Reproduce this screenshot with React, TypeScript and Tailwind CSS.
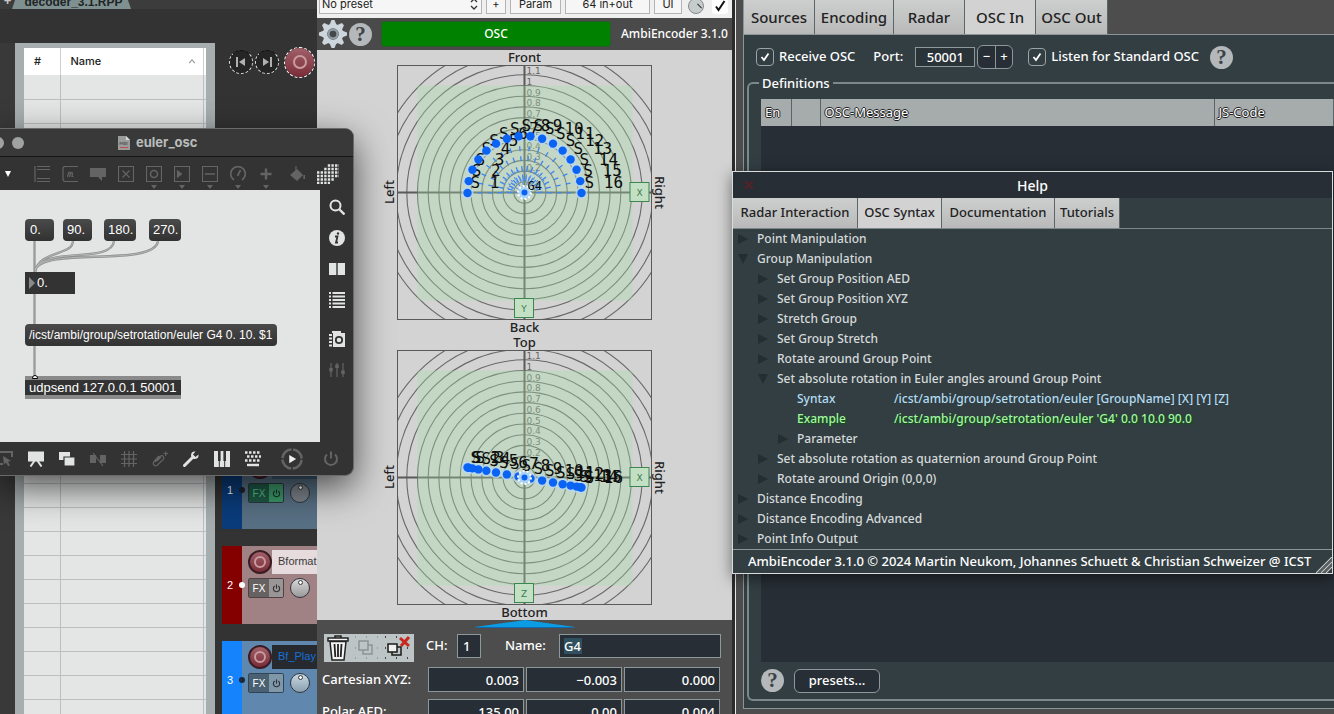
import React from "react";

const LUCIDA = "font-['Noto_Sans','Open_Sans',sans-serif]";

/* ---------- shared bits ---------- */

function HelpBadge({ className = "" }: { className?: string }) {
  return (
    <button
      aria-label="Show help"
      className={`flex size-[23px] shrink-0 items-center justify-center rounded-full bg-[#b4b8ba] font-['Liberation_Serif',serif] text-[21px] leading-none font-bold text-[#3c4447] ${className}`}
    >
      ?
    </button>
  );
}

/* ---------- DAW (left column) ---------- */

function RecordButton({ size }: { size: "sm" | "lg" }) {
  return (
    <button
      aria-label="Record"
      className={`flex shrink-0 items-center justify-center rounded-full bg-linear-to-b from-[#a0606a] to-[#7a2c38] ${
        size === "lg" ? "size-[29px] outline outline-dashed outline-white" : "size-6 border-2 border-[#3a1c22]"
      }`}
    >
      <span className={`rounded-full border-2 border-[#c99ba0] ${size === "lg" ? "size-[14px]" : "size-3"}`} />
    </button>
  );
}

function SkipButton({ dir }: { dir: "back" | "next" }) {
  return (
    <button
      aria-label={dir === "back" ? "Go to start" : "Go to end"}
      className="flex size-6 items-center justify-center rounded-full border border-dashed border-[#dddddd] border-t-[#111111] bg-[#252525]"
    >
      <svg viewBox="0 0 10 10" className="size-[10px] fill-[#b0b0b0]">
        {dir === "back" ? <path d="M0 0h2v10H0zM9 1v8L3 5z" /> : <path d="M8 0h2v10H8zM1 1v8l6-4z" />}
      </svg>
    </button>
  );
}

function PowerGlyph({ className }: { className: string }) {
  return (
    <svg viewBox="0 0 16 16" className={className} fill="none" stroke="currentColor" strokeWidth="2" strokeLinecap="round">
      <path d="M8 1.5v6M4.3 4a5.6 5.6 0 1 0 7.4 0" />
    </svg>
  );
}

type TrackProps = {
  n: number;
  name: string;
  strip: string;
  body: string;
  nameBox: string;
  fx: string;
  fxOn: string;
  knob: string;
  dot: string;
};

function Track({ n, name, strip, body, nameBox, fx, fxOn, knob, dot }: TrackProps) {
  return (
    <section className={`flex h-[78px] shrink-0 ${body}`}>
      <div className={`relative flex w-5 items-center justify-center font-['Liberation_Sans',sans-serif] text-[11px] text-white ${strip}`}>
        <span className="pr-1">{n}</span>
        <span className={`absolute -right-[3px] size-[6px] rounded-full ${dot}`} />
      </div>
      <div className="flex min-w-0 flex-1 flex-col gap-1 overflow-hidden pt-1 pl-[6px]">
        <div className="flex items-center">
          <RecordButton size="sm" />
          <span
            className={`h-6 flex-1 overflow-hidden pl-[6px] font-['Liberation_Sans',sans-serif] text-[11px] leading-[23px] whitespace-nowrap ${nameBox}`}
          >
            {name}
          </span>
        </div>
        <div className="flex items-center gap-[6px]">
          <div className="flex h-5 w-9 shrink-0 overflow-hidden rounded-[2px] border border-black/50">
            <button className={`w-5 font-['Liberation_Sans',sans-serif] text-[10px] ${fx}`}>FX</button>
            <button aria-label="FX bypass" className={`flex flex-1 items-center justify-center ${fxOn}`}>
              <PowerGlyph className="size-[9px]" />
            </button>
          </div>
          <span className={`flex size-5 shrink-0 justify-center rounded-full border border-[#30353a] ${knob}`}>
            <span className="mt-[2px] size-[3px] rounded-full bg-white outline outline-[#444444]" />
          </span>
        </div>
      </div>
    </section>
  );
}

function Daw() {
  return (
    <div className="flex w-[317px] shrink-0 flex-col overflow-hidden bg-[#333333]">
      <div className="flex h-[9px] shrink-0 items-end bg-[#3c3c3c] font-['Liberation_Sans',sans-serif] font-bold">
        <button className="w-3 pl-[3px] text-[13px] leading-[16px] text-[#c8c8c8]">+</button>
        <div className="w-[119px] bg-[#7f9090] pl-1 text-center text-[12px] leading-[14px] text-[#1e2626] [clip-path:polygon(4%_0,96%_0,100%_100%,0_100%)]">
          decoder_3.1.RPP
        </div>
      </div>
      <div className="flex min-h-0 flex-1">
        <div className="mt-[34px] w-[15px] bg-[#393939]" />
        <div className="mt-[34px] w-[200px] shrink-0 overflow-hidden bg-[#a6aeb0] pt-[5px] pr-[9px] pl-[9px]">
          <table className="w-full table-fixed border-collapse bg-[#e4e5e5] font-[Inter,sans-serif] text-[11px] font-medium text-[#222222]">
            <thead>
              <tr className="h-[27px] bg-white text-left">
                <th className="w-9 border-r border-[#cfcfcf] pl-[10px] font-medium">#</th>
                <th className="pl-[10px] font-medium">
                  <span className="flex items-center justify-between pr-[7px]">
                    Name
                    <svg viewBox="0 0 8 6" className="h-[5px] w-2" fill="none" stroke="#999" strokeWidth="1.3">
                      <path d="M.5 5 4 1l3.500 4" />
                    </svg>
                  </span>
                </th>
                <th className="w-[3px] border-l border-[#cfcfcf]" />
              </tr>
            </thead>
            <tbody>
              {Array.from({ length: 28 }, (_, i) => (
                <tr key={i} className="h-6 border-b border-[#bcbebf]">
                  <td className="border-r border-[#bcbebf]" />
                  <td />
                  <td className="border-l border-[#bcbebf]" />
                </tr>
              ))}
            </tbody>
          </table>
        </div>
        <div className="flex min-w-0 flex-1 flex-col gap-[17px] pl-[7px]">
          <div className="mt-[38px] mb-[357px] flex h-[30px] shrink-0 items-center gap-[2px] pl-[7px]">
            <SkipButton dir="back" />
            <SkipButton dir="next" />
            <span className="w-[2px]" />
            <RecordButton size="lg" />
          </div>
          <Track n={1} name="Enc" strip="bg-[#0a3c7c]" body="bg-[#587084]" nameBox="bg-[#3c5870]" fx="bg-[#1f5a45] text-[#58c890]" fxOn="bg-[#3d9a6b] text-[#113a28]" knob="bg-[#7d858b]" dot="bg-[#1a2430]" />
          <Track n={2} name="Bformat" strip="bg-[#840000]" body="bg-[#a08285]" nameBox="bg-[#e6dcdd] text-[#3a3a3a]" fx="bg-[#666262] text-white" fxOn="bg-[#9a9596] text-[#333333]" knob="bg-linear-to-b from-[#d8d8d8] to-[#9a9a9a]" dot="bg-white" />
          <Track n={3} name="Bf_Play" strip="bg-[#1583fb]" body="bg-[#6088ae]" nameBox="bg-[#262a2e] text-[#1670d8]" fx="bg-[#4a6073] text-white" fxOn="bg-[#8097a8] text-[#28333c]" knob="bg-linear-to-b from-[#c8d8e2] to-[#8aa0b0]" dot="bg-[#1a2a3c]" />
        </div>
      </div>
    </div>
  );
}

/* ---------- radar views ---------- */

const C = 127.5;
const RING = 10.7;
const SOURCES = Array.from({ length: 16 }, (_, i) => {
  const a = Math.PI - (i * 12 * Math.PI) / 180;
  return { n: i + 1, cos: Math.cos(a), sin: Math.sin(a) };
});
const RING_LABELS = ["1.1", "1", "0.9", "0.8", "0.7", "0.6", "0.5", "0.4", "0.3", "0.2"];

function Radar({ top, bottom, axis, side }: { top: string; bottom: string; axis: string; side?: boolean }) {
  const pts = SOURCES.map((s) => ({
    n: s.n,
    x: C + 57 * s.cos,
    y: side ? C + 10 * s.cos : C + 0.5 - 57 * s.sin,
  }));
  return (
    <section className="flex flex-col items-center text-[13px] font-medium text-[#222222]">
      <h3 className="leading-[15px]">{top}</h3>
      <div className="flex items-center">
        <span className="w-4 rotate-180 leading-4 [writing-mode:vertical-rl]">Left</span>
        <svg viewBox="0 0 255 255" className="size-[255px] shrink-0">
          <defs>
            <clipPath id={`clip-${axis}`}>
              <rect x="0" y="0" width="255" height="255" />
            </clipPath>
          </defs>
          <g clipPath={`url(#clip-${axis})`} fill="none" stroke="#686868" strokeWidth="1.1">
            {Array.from({ length: 14 }, (_, i) => (
              <circle key={i} cx={C} cy={C} r={(i + 1) * RING} />
            ))}
            <path d={`M${C} 0V255M0 ${C}H255`} stroke="#5a5a5a" strokeWidth="2" />
          </g>
          <rect x=".5" y=".5" width="254" height="254" fill="none" stroke="#5a5a5a" />
          <g fill="#666" fontSize="9" fontFamily="DejaVu Sans, sans-serif">
            {RING_LABELS.map((t, i) => (
              <text key={t} x={C + 2} y={C - (11 - i) * RING - 0.5}>
                {t}
              </text>
            ))}
          </g>
          <rect x={C - 107} y={C - 107} width="215" height="215" fill="#a8e0a8" fillOpacity=".34" />
          <g fill="#c4e0c4" stroke="#3c8650">
            <rect x="233" y="117.5" width="19" height="19" />
            <rect x="117.500" y="233.500" width="19" height="19" />
          </g>
          <g fill="#3c7a4c" fontSize="9" fontFamily="DejaVu Sans, sans-serif" textAnchor="middle">
            <text x="242.500" y="130.500">X</text>
            <text x="127" y="246.500">{axis}</text>
          </g>
          {!side && (
            <g stroke="#3f86f0" strokeWidth="1.300" strokeDasharray="5 5">
              {pts.map((p) => (
                <line key={p.n} x1={p.x} y1={p.y} x2={C} y2={C} />
              ))}
            </g>
          )}
          {!side &&
            [9, 13, 17, 22].map((r) => (
              <path key={r} d={`M${C - r} ${C}a${r} ${r} 0 0 1 ${2 * r} 0`} fill="none" stroke="#4c8cf0" strokeWidth="2.500" strokeDasharray="1 3" />
            ))}
          <g fill="#b8d8f8" fillOpacity=".75">
            {pts.map((p) => (
              <circle key={p.n} cx={p.x} cy={p.y} r="6" />
            ))}
          </g>
          <g fontFamily="DejaVu Sans Mono, monospace" fontSize="16" fill="#0c0c0c">
            {pts.map((p) => (
              <text key={p.n} x={p.x + 3} y={p.y - 5}>{`S ${p.n}`}</text>
            ))}
          </g>
          <g fill="#0a63f2">
            {pts.map((p) => (
              <circle key={p.n} cx={p.x} cy={p.y} r="4.200" />
            ))}
          </g>
          <circle cx={C} cy={C} r="6.500" fill="#a9d2f5" stroke="#fff" strokeWidth="2" strokeDasharray="2 2" />
          <circle cx={C} cy={C} r="3" fill="#0a63f2" />
          {!side && (
            <text x={C + 3} y={C - 3} fontFamily="DejaVu Sans Mono, monospace" fontSize="12" fill="#0c0c0c">
              G4
            </text>
          )}
        </svg>
        <span className="w-4 leading-4 [writing-mode:vertical-rl]">Right</span>
      </div>
      <h3 className="leading-[15px]">{bottom}</h3>
    </section>
  );
}

/* ---------- encoder plug-in ---------- */

function NumberRow({ label, values }: { label: string; values: string[] }) {
  return (
    <div className="flex h-[25px] items-center">
      <span className="w-[106px] shrink-0 whitespace-nowrap">{label}</span>
      <div className="flex gap-[2px]">
        {values.map((v, i) => (
          <input
            key={i}
            aria-label={`${label} ${i + 1}`}
            defaultValue={v}
            className="h-[25px] w-24 border border-[#8c989a] bg-[#272e35] pr-1 text-right text-[13px] text-white"
          />
        ))}
      </div>
    </div>
  );
}

const HOST_BTN = "h-5 shrink-0 border border-[#b4b4b4] bg-[#f6f6f6] leading-none";

function Encoder() {
  return (
    <div className={`flex w-[418px] shrink-0 flex-col overflow-hidden border-r-3 border-[#2c2c2c] bg-[#4d4d4d] ${LUCIDA}`}>
      <div className="flex h-[18px] shrink-0 items-end gap-1 bg-[#efefef] px-[2px] pb-1 font-[Inter,sans-serif] text-[11px] text-[#222222]">
        <div className="relative w-[163px] shrink-0">
          <select aria-label="Preset" className={`w-full appearance-none pl-[2px] ${HOST_BTN} block`}>
            <option>No preset</option>
          </select>
          <svg viewBox="0 0 8 12" className="pointer-events-none absolute top-1 right-1 h-3 w-2" fill="none" stroke="#333" strokeWidth="1.300">
            <path d="M1 4l3-3 3 3M1 8l3 3 3-3" />
          </svg>
        </div>
        <button className={`w-5 ${HOST_BTN}`}>+</button>
        <button className={`w-[51px] ${HOST_BTN}`}>Param</button>
        <button className={`w-[85px] ${HOST_BTN}`}>64 in+out</button>
        <button className={`w-7 ${HOST_BTN}`}>UI</button>
        <span className="ml-[2px] flex size-4 shrink-0 items-center justify-end rounded-full border border-[#888888] bg-[#c6cccc] pr-[3px]">
          <span className="h-[6px] w-px -rotate-45 bg-[#333333]" />
        </span>
        <label className="relative ml-1 flex size-4 shrink-0 items-center justify-center rounded-[3px] bg-white">
          <input type="checkbox" defaultChecked aria-label="Enabled" className="absolute inset-0 appearance-none" />
          <svg viewBox="0 0 12 12" className="size-3" fill="none" stroke="#111" strokeWidth="2">
            <path d="M2 6.500 4.500 10 10.500 1" />
          </svg>
        </label>
      </div>

      <header className="flex h-8 shrink-0 items-center bg-[#4a4a4a] pl-[2px]">
        <button aria-label="Settings" className="size-7 shrink-0">
          <svg viewBox="-14 -14 28 28" className="size-7">
            <g fill="#cdd6dc">
              {[0, 45, 90, 135, 180, 225, 270, 315].map((a) => (
                <path key={a} d="M-3.500-9-1.500-14H1.500L3.500-9z" transform={`rotate(${a})`} />
              ))}
            </g>
            <circle r="8" fill="none" stroke="#cdd6dc" strokeWidth="4.500" />
            <circle r="5.500" fill="#8f9ba4" />
            <circle r="3.300" fill="#44484b" />
          </svg>
        </button>
        <HelpBadge className="ml-[2px]" />
        <div className="ml-[9px] flex h-[26px] flex-1 items-center justify-center rounded-[3px] border border-[#2c5a2c] bg-[#008200] text-[12px] font-medium text-white">
          OSC
        </div>
        <h1 className="w-[121px] pl-[10px] text-[12px] font-medium whitespace-nowrap text-white">AmbiEncoder 3.1.0</h1>
      </header>

      <main className="shrink-0 bg-[#d3d3d3]">
        <Radar top="Front" bottom="Back" axis="Y" />
        <Radar top="Top" bottom="Bottom" axis="Z" side />
      </main>

      <div className="flex flex-col text-[13px] font-medium text-white">
        <svg viewBox="0 0 100 8" className="h-2 w-[100px] self-center">
          <path d="M0 7 50 0l50 7-4 1H4z" fill="#0c9ce4" />
          <path d="M0 7h100l-4 1H4z" fill="#1068b0" />
        </svg>
        <div className="mt-[6px] flex h-7 pl-[7px]">
          <div className="flex w-[90px] shrink-0 items-center gap-1 bg-[#bcc4c6] pl-[3px]">
            <button aria-label="Delete">
              <svg viewBox="0 0 22 26" className="h-[26px] w-[22px]" fill="none" stroke="#222" strokeWidth="1.500">
                <path d="M8 3V1h6v2" />
                <path d="M1 3h20v3H1z" fill="#f4f4f4" />
                <path d="M3 6.500 5 25h12l2-18.500z" fill="#f4f4f4" />
                <path d="M7.500 9l.8 13M11 9v13M14.500 9l-.8 13" strokeWidth="1.800" />
              </svg>
            </button>
            <button aria-label="Group">
              <svg viewBox="0 0 26 26" className="size-[26px]" fill="none" stroke="#8b9496" strokeWidth="1.500">
                <path d="M6 6h9v9H6zM15 10h4v9h-9v-4" />
                <path d="M2 2h1M13 2h1M24 2h1M2 13h1M24 13h1M2 23h1M13 23h1M24 23h1" />
              </svg>
            </button>
            <button aria-label="Ungroup">
              <svg viewBox="0 0 28 26" className="h-[26px] w-7" fill="none" stroke="#1a1a1a" strokeWidth="1.500">
                <path d="M5 9h9v8H5z" fill="#f0f0f0" />
                <path d="M14 12h4v8h-9v-3" />
                <path d="M2 2h1M13 2h1M2 13h1M2 23h1M13 23h1M24 23h1M24 13h1" />
                <path d="m17 3 9 8M26 2l-8 9" stroke="#c8281c" strokeWidth="3" />
              </svg>
            </button>
          </div>
          <label className="ml-3 flex h-6 items-center">
            <span className="w-[31px]">CH:</span>
            <input defaultValue="1" className="h-6 w-6 border border-[#8c989a] bg-[#272e35] pl-[5px] text-[13px]" />
          </label>
          <label className="ml-6 flex h-6 items-center">
            <span className="w-[54px]">Name:</span>
            <input defaultValue="G4" className="h-6 w-[162px] border border-[#8c989a] bg-[#272e35] bg-[linear-gradient(#31505f,#31505f)] bg-[length:18px_16px] bg-[position:4px_3px] bg-no-repeat pl-1 text-[13px]" />
          </label>
        </div>
        <div className="mt-[5px] flex flex-col gap-[7px] pl-[5px]">
          <NumberRow label="Cartesian XYZ:" values={["0.003", "−0.003", "0.000"]} />
          <NumberRow label="Polar AED:" values={["135.00", "0.00", "0.004"]} />
        </div>
      </div>
    </div>
  );
}

/* ---------- settings ---------- */

function Tab({ children, width, active, big }: { children: string; width: string; active?: boolean; big?: boolean }) {
  return (
    <button
      role="tab"
      aria-selected={!!active}
      className={`shrink-0 border-r border-[#5c6668] font-medium whitespace-nowrap text-[#222222] ${width} ${
        big ? "h-[34px] text-[15px]" : "h-[30px] text-[13px]"
      } ${active ? "bg-[#d2d2d2]" : "bg-linear-to-b from-[#cdcfcf] to-[#b9b9b9]"}`}
    >
      {children}
    </button>
  );
}

function Check({ label }: { label: string }) {
  return (
    <label className="flex shrink-0 items-center gap-[5px] whitespace-nowrap">
      <span className="relative flex size-[18px] items-center justify-center rounded-[4px] border border-[#9aa4a6]">
        <input type="checkbox" defaultChecked className="absolute inset-0 appearance-none" />
        <svg viewBox="0 0 10 10" className="size-[10px]" fill="none" stroke="#fff" strokeWidth="1.800">
          <path d="M1.500 5 4 8l4.500-6.500" />
        </svg>
      </span>
      {label}
    </label>
  );
}

const TH = "border-r border-[#5a6466] pl-1 text-left font-normal";

function Settings() {
  return (
    <div className={`flex min-w-0 flex-1 flex-col border-l border-[#e8e8e8] bg-[#4d4d4d] pb-[5px] pl-[7px] text-[13px] font-medium text-white ${LUCIDA}`}>
      <div role="tablist" className="flex shrink-0 border-l border-[#8a9698]">
        <Tab big width="w-[71px]">Sources</Tab>
        <Tab big width="w-[79px]">Encoding</Tab>
        <Tab big width="w-[71px]">Radar</Tab>
        <Tab big active width="w-[71px]">OSC In</Tab>
        <Tab big width="w-[72px]">OSC Out</Tab>
      </div>
      <div className="flex min-h-0 flex-1 flex-col border-t border-b border-l border-[#8a9698] bg-[#323e42] pb-[7px] pl-[3px]">
        <div className="flex h-11 shrink-0 items-center pl-[9px]">
          <Check label="Receive OSC" />
          <label className="ml-[18px] flex items-center">
            <span className="w-[42px]">Port:</span>
            <input defaultValue="50001" className="h-5 w-[60px] border border-[#8c989a] bg-[#2a3338] text-center text-[13px]" />
          </label>
          <div className="ml-[2px] flex h-6 w-9 shrink-0 divide-x divide-[#8c989a] overflow-hidden rounded-[6px] border border-[#8c989a] bg-[#272e35]">
            <button aria-label="Decrease port" className="flex-1">−</button>
            <button aria-label="Increase port" className="flex-1">+</button>
          </div>
          <span className="w-[15px]" />
          <Check label="Listen for Standard OSC" />
          <HelpBadge className="ml-[11px]" />
        </div>
        <fieldset className="-mt-[2px] flex min-h-0 min-w-0 flex-1 flex-col rounded-l-[6px] border-2 border-r-0 border-[#7c898b] pl-3">
          <legend className="-ml-[2px] px-[3px] leading-3">Definitions</legend>
          <div className="mt-[10px] min-h-0 flex-1 overflow-hidden bg-[#272e35]">
            <table className="w-full table-fixed border-collapse">
              <thead>
                <tr className="h-[27px] bg-[#a6abac] text-[13px] text-white [text-shadow:1px_0_#222,-1px_0_#222,0_1px_#222,0_-1px_#222]">
                  <th className={`w-[30px] ${TH}`}>En</th>
                  <th className={`w-[29px] ${TH}`} />
                  <th className={`w-[394px] ${TH}`}>OSC-Message</th>
                  <th className={TH}>JS-Code</th>
                </tr>
              </thead>
            </table>
          </div>
          <div className="flex h-[37px] shrink-0 items-center gap-[10px]">
            <HelpBadge />
            <button className="h-6 w-[86px] rounded-[6px] border border-[#8c989a] bg-[#272e35]">presets...</button>
          </div>
        </fieldset>
      </div>
    </div>
  );
}

/* ---------- help window ---------- */

type Node = { depth: 0 | 1 | 2; text: string; open?: boolean; leaf?: "syntax" | "example"; value?: string };
const TREE: Node[] = [
  { depth: 0, text: "Point Manipulation" },
  { depth: 0, text: "Group Manipulation", open: true },
  { depth: 1, text: "Set Group Position AED" },
  { depth: 1, text: "Set Group Position XYZ" },
  { depth: 1, text: "Stretch Group" },
  { depth: 1, text: "Set Group Stretch" },
  { depth: 1, text: "Rotate around Group Point" },
  { depth: 1, text: "Set absolute rotation in Euler angles around Group Point", open: true },
  { depth: 2, text: "Syntax", leaf: "syntax", value: "/icst/ambi/group/setrotation/euler [GroupName] [X] [Y] [Z]" },
  { depth: 2, text: "Example", leaf: "example", value: "/icst/ambi/group/setrotation/euler 'G4' 0.0 10.0 90.0" },
  { depth: 2, text: "Parameter" },
  { depth: 1, text: "Set absolute rotation as quaternion around Group Point" },
  { depth: 1, text: "Rotate around Origin (0,0,0)" },
  { depth: 0, text: "Distance Encoding" },
  { depth: 0, text: "Distance Encoding Advanced" },
  { depth: 0, text: "Point Info Output" },
];
const INDENT = ["pl-[5px]", "pl-[25px]", "pl-[45px]"];
const LEAF = { syntax: "text-[#b4dcf2]", example: "text-[#a6f4a6] [text-shadow:1px_1px_2px_#006000]" };

function HelpWindow() {
  return (
    <div
      role="dialog"
      aria-label="Help"
      className={`absolute top-[171px] right-px left-[732px] flex flex-col border border-[#d8dcdc] bg-[#323e42] text-[12px] font-medium shadow-[0_4px_14px_rgba(0,0,0,0.5)] ${LUCIDA}`}
    >
      <div className="relative flex h-[26px] items-center justify-center bg-[#272e35]">
        <button aria-label="Close" className="absolute left-[11px]">
          <svg viewBox="0 0 10 10" className="size-[10px]" stroke="#552228" strokeWidth="1.800">
            <path d="m1 1 8 8M9 1 1 9" />
          </svg>
        </button>
        <h2 className="text-[14px] font-medium text-white">Help</h2>
      </div>
      <div role="tablist" className="flex border-b border-[#7c898b]">
        <Tab width="w-[125px]">Radar Interaction</Tab>
        <Tab active width="w-[84px]">OSC Syntax</Tab>
        <Tab width="w-[113px]">Documentation</Tab>
        <Tab width="w-[65px]">Tutorials</Tab>
      </div>
      <ul className="h-[320px] text-[#d6dadb]">
        {TREE.map((n) => (
          <li key={n.text} className={`flex h-5 items-center whitespace-nowrap ${INDENT[n.depth]} ${n.leaf ? LEAF[n.leaf] : ""}`}>
            {n.leaf ? (
              <>
                <span className="w-[116px] pl-[19px]">{n.text}</span>
                <span>{n.value}</span>
              </>
            ) : (
              <button aria-expanded={!!n.open} className="flex items-center gap-[9px]">
                <svg viewBox="0 0 10 10" className="size-[10px] fill-[#242d31]">
                  {n.open ? <path d="M0 0h10L5 10z" /> : <path d="M0 0v10l10-5z" />}
                </svg>
                {n.text}
              </button>
            )}
          </li>
        ))}
      </ul>
      <footer className="relative flex h-6 items-center border-t border-[#8a9698] pl-[15px] text-[13px] whitespace-nowrap text-white">
        AmbiEncoder 3.1.0 © 2024 Martin Neukom, Johannes Schuett &amp; Christian Schweizer @ ICST
        <svg viewBox="0 0 16 16" className="absolute right-0 bottom-0 size-4" stroke="#c8cccc" strokeWidth="1.200">
          <path d="M0 16 16 0M5 16 16 5M10 16l6-6" />
          <path d="M2.500 16 16 2.500M7.500 16 16 7.500" stroke="#666" />
        </svg>
      </footer>
    </div>
  );
}

/* ---------- patcher window ---------- */

function Ico({ label, children, dim, drop, size = "size-4" }: { label: string; children: React.ReactNode; dim?: boolean; drop?: boolean; size?: string }) {
  return (
    <button aria-label={label} className={`relative flex shrink-0 justify-center ${dim ? "text-[#646464]" : "text-[#e2e4e4]"}`}>
      <svg viewBox="0 0 16 16" className={size} fill="none" stroke="currentColor" strokeWidth="1.200">
        {children}
      </svg>
      {drop && (
        <svg viewBox="0 0 6 4" className="absolute -bottom-[7px] h-1 w-[6px] fill-current">
          <path d="M0 0h6L3 4z" />
        </svg>
      )}
    </button>
  );
}

const MSG = "absolute flex h-[22px] items-center rounded-[4px] bg-linear-to-b from-[#4a4a4a] to-[#323232] whitespace-nowrap text-white";

function Patcher() {
  return (
    <div className="absolute top-32 left-0 flex w-[354px] flex-col overflow-hidden rounded-tr-[9px] rounded-br-[9px] border-t border-r border-b border-[#6a6a6a] bg-[#333333] font-['Liberation_Sans',sans-serif] text-[13px] shadow-[0_12px_36px_rgba(0,0,0,0.65)]">
      <div className="flex h-7 items-center border-b border-[#161616] bg-[#393939]">
        <span className="-ml-2 size-3 rounded-full bg-[#a0a2a2]" />
        <span className="ml-2 size-3 rounded-full bg-[#a0a2a2]" />
        <svg viewBox="0 0 12 14" className="ml-[94px] h-[14px] w-3">
          <path d="M0 0h8l4 4v10H0z" fill="#9a9c9c" />
          <path d="M8 0v4h4z" fill="#d8d8d8" />
          <path d="M2 9V6l1.500 2L5 6v3M6 6l2 3M8 6 6 9M9 6v3" stroke="#555" strokeWidth=".8" fill="none" />
          <path d="M2 11.500h8" stroke="#c05050" />
        </svg>
        <h2 className="ml-[6px] font-[Inter,sans-serif] text-[13px] font-bold text-[#b8bcbc]">euler_osc</h2>
      </div>
      <div className="flex h-[33px] items-center gap-3 pl-1">
        <button aria-label="Menu" className="mr-[10px]">
          <svg viewBox="0 0 8 6" className="h-[6px] w-2 fill-white"><path d="M1 0h6L4 6z" /></svg>
        </button>
        <Ico label="Object" dim><path d="M1 0v16M3 .5h13M3 3.500h13M3 12.500h13M3 15.500h13" /></Ico>
        <Ico label="Message" dim>
          <path d="M16 .5H3Q1 .5 1 3v10q0 2.500 2 2.500h13" />
          <path d="M5.500 11 6.500 7q2-2 1.800 1L7.500 11l1-3.500q2.200-2 1.900.5L10 10.500h1.500" />
        </Ico>
        <Ico label="Comment" dim><path d="M0 2h16v9h-4v4L8 11H0z" fill="currentColor" stroke="none" /></Ico>
        <Ico label="Toggle" dim><path d="M.5.5h15v15H.5zM4.500 4.500l7 7M11.500 4.500l-7 7" /></Ico>
        <Ico label="Button" dim drop><path d="M.5.5h15v15H.5z" /><circle cx="8" cy="8" r="3.500" strokeWidth="1.500" /></Ico>
        <Ico label="Number" dim drop><path d="M.5.5h15v15H.5z" /><path d="M3.500 5v6l4-3z" fill="currentColor" /></Ico>
        <Ico label="Slider" dim drop><path d="M.5.5h15v15H.5z" /><path d="M3 8h10" strokeWidth="1.600" /></Ico>
        <Ico label="Dial" dim drop><path d="M4 14a7.300 7.300 0 1 1 8 0M7.500 10l3-6" strokeWidth="1.700" /></Ico>
        <Ico label="Add" dim drop><path d="M8 2.500v11M2.500 8h11" strokeWidth="2.400" /></Ico>
        <span className="-mr-[9px]" />
        <Ico label="Format" dim>
          <path d="M1 9l7-6 6 6-6 6z" fill="currentColor" stroke="none" />
          <path d="M7 0v6" />
          <path d="M15.200 9v4" strokeWidth="1.600" />
        </Ico>
        <button aria-label="Grid" className="shrink-0 text-[#e2e4e4]">
          <svg viewBox="0 0 22 20" className="h-5 w-[22px]" stroke="currentColor" strokeWidth="2.400" strokeDasharray="2.400 1.200">
            <path d="M10.800 1.500H22M7.200 5H22M0 8.500h22M0 12h22M0 15.500h18M0 19h13" />
          </svg>
        </button>
      </div>

      <div className="flex">
        <div className="relative h-[252px] flex-1 bg-[#e3e4e4]">
          <svg viewBox="0 0 320 252" className="absolute inset-0 h-[252px] w-[320px]" fill="none" stroke="#8e9090" strokeWidth="2.400">
            <path d="M34.500 51v32M34.500 104v30M34.500 156v31" stroke="#9b9d9d" />
            <path d="M73 51C73 66 38 60 35 83M114 51C112 74 44 56 35 80M158 51C154 78 44 56 35 80" />
            <path d="M73 51C73 66 38 60 35 83M114 51C112 74 44 56 35 80M158 51C154 78 44 56 35 80" stroke="#b4b6b6" strokeWidth="1" />
          </svg>
          <button className={`${MSG} top-[29px] left-[25px] w-[29px] pl-[5px]`}>0.</button>
          <button className={`${MSG} top-[29px] left-[63px] w-[29px] pl-[4px]`}>90.</button>
          <button className={`${MSG} top-[29px] left-[104px] w-8 pl-[4px]`}>180.</button>
          <button className={`${MSG} top-[29px] left-[149px] w-8 pl-[4px]`}>270.</button>
          <div className="absolute top-[82px] left-[25px] flex h-[22px] w-[50px] items-center gap-[2px] bg-[#333333] pl-1 text-white">
            <svg viewBox="0 0 6 12" className="h-3 w-[6px] fill-[#8a8a8a]"><path d="M0 0v12l6-6z" /></svg>
            0.
          </div>
          <button className={`${MSG} top-[134px] left-[25px] w-[252px] pl-1 text-[12px]`}>/icst/ambi/group/setrotation/euler G4 0. 10. $1</button>
          <div className="absolute top-[186px] left-[25px] flex h-[23px] w-[156px] items-center border-y-4 border-[#8a8a8a] bg-[#333333] pl-1 whitespace-nowrap text-white">
            udpsend 127.0.0.1 50001
          </div>
          <span className="absolute top-[185px] left-8 h-1 w-[6px] rounded-t-full border border-black bg-white" />
        </div>
        <div className="flex w-[33px] flex-col items-center gap-[15px] pt-[9px]">
          <Ico label="Search"><circle cx="6.500" cy="6.500" r="5" strokeWidth="2" /><path d="m10.500 10.500 5 5" strokeWidth="2.400" /></Ico>
          <Ico label="Info">
            <circle cx="8" cy="8" r="8" fill="currentColor" stroke="none" />
            <path d="M6 6.500h2.500L7 12.500h2" stroke="#333" strokeWidth="1.800" />
            <circle cx="9" cy="3.500" r="1.200" fill="#333" stroke="none" />
          </Ico>
          <Ico label="Columns"><path d="M0 2h7.300v12H0zM8.700 2H16v12H8.700z" fill="currentColor" stroke="none" /></Ico>
          <Ico label="List"><path d="M0 1h2M3.500 1H16M0 4.500h2M3.500 4.500H16M0 8h2M3.500 8H16M0 11.500h2M3.500 11.500H16M0 15h2M3.500 15H16" strokeWidth="1.800" /></Ico>
          <span className="-mt-[7px] h-0" />
          <Ico label="Snapshots">
            <path d="M3 2V0h9v2h4v14H4V2z" fill="currentColor" stroke="none" />
            <path d="M0 4h3M0 7.500h3M0 11h3M0 14.500h3" strokeWidth="1.800" />
            <circle cx="10" cy="9" r="3.200" stroke="#333" strokeWidth="1.800" />
          </Ico>
          <Ico label="Mixer" dim>
            <path d="M2 1v14M8 1v14M14 1v14" />
            <path d="M2 6v3.500M8 2.500V6M14 8.500V12" strokeWidth="3.500" />
          </Ico>
        </div>
      </div>

      <div className="flex h-[33px] items-center justify-between pr-[14px]">
        <div className="-ml-[3px] flex items-center gap-[15px]">
          <Ico label="Select" dim><path d="M0 1h15v5M0 13h6" strokeWidth="2" /><path d="M6 5l8 5-3 .500 2 4-2 .500-2-3.500-2 2z" fill="currentColor" stroke="none" /></Ico>
          <Ico label="Presentation"><path d="M0 .5h16v10H0z" fill="currentColor" stroke="none" /><path d="m7 9-4.500 6.500M9 9l4.500 6.500" strokeWidth="2" /></Ico>
          <Ico label="Layers"><path d="M0 1h11v8H0z" fill="currentColor" stroke="none" /><path d="M5 6h11v9H5z" fill="currentColor" stroke="#333" /></Ico>
          <Ico label="Hide cords" dim><path d="M0 4h6v8H0zM10 4h6v8h-6z" fill="currentColor" stroke="none" /><path d="m3 2 10 13" /></Ico>
          <Ico label="Snap grid" dim><path d="M3.500 0v16M8 0v16M12.500 0v16M0 3.500h16M0 8h16M0 12.500h16" /></Ico>
          <Ico label="Attach" dim><path d="m5 10 4-4M3 11l5-5.500q2.500-2 3.500.5T10 9.500L5.500 14q-2 1.500-3.500 0t0-3.500L7 5M11.500 2.500h4.500M13.700.5V5" /></Ico>
          <Ico label="Tools"><path d="M1.500 14.500 10 6" strokeWidth="3" strokeLinecap="round" /><path d="M15.500 3.500 12.500 6 10 3.500 12.500.500Q8 0 8 4.500 9 8.500 12 8q4-.500 3.500-4.500z" fill="currentColor" stroke="none" /></Ico>
          <Ico label="Keys"><path d="M0 0h16v16H0z" fill="currentColor" stroke="none" /><path d="M5.300 0v10M10.700 0v10" stroke="#333" strokeWidth="2.600" /><path d="M5.300 9v7M10.700 9v7" stroke="#333" strokeWidth="1" /></Ico>
          <Ico label="Keyboard"><path d="M0 1.500h16M2 5.500h14M0 9.500h16" strokeWidth="2.400" strokeDasharray="2.500 1.500" /><path d="M2 14h12" strokeWidth="2.400" /></Ico>
        </div>
        <div className="flex items-center gap-5">
          <Ico label="Run" dim size="size-[22px]"><circle cx="8" cy="8" r="7" strokeWidth="1.800" strokeDasharray="9.800 1.200" strokeDashoffset="-.6" /><path d="M6 5v6l5-3z" fill="#f0f0f0" stroke="none" /></Ico>
          <Ico label="Power" dim><path d="M8 .500v7M4 3.500a6 6 0 1 0 8 0" strokeWidth="2" /></Ico>
        </div>
      </div>
    </div>
  );
}

export default function App() {
  return (
    <div className="relative flex h-screen overflow-hidden bg-[#333333]">
      <Daw />
      <Encoder />
      <Settings />
      <Patcher />
      <HelpWindow />
    </div>
  );
}
